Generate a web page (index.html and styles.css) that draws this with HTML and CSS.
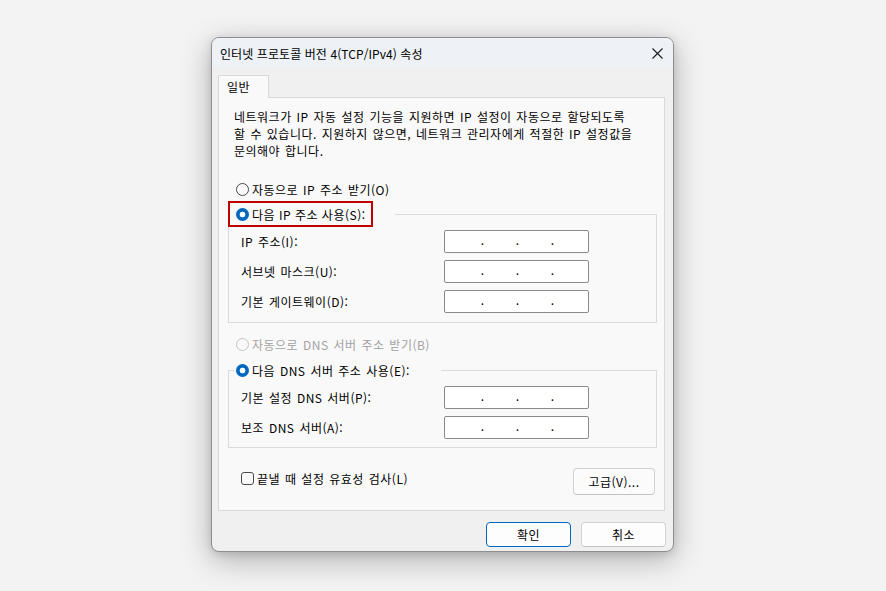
FILE: index.html
```html
<!DOCTYPE html>
<html lang="ko">
<head>
<meta charset="utf-8">
<title>인터넷 프로토콜 버전 4(TCP/IPv4) 속성</title>
<link rel="stylesheet" href="styles.css">
</head>
<body>
<div class="dialog">
  <div class="titlebar">
    <span class="title">인터넷 프로토콜 버전 4(TCP/IPv4) 속성</span>
    <svg class="close" width="11" height="11" viewBox="0 0 11 11"><path d="M0.5 0.5 L10.5 10.5 M10.5 0.5 L0.5 10.5" stroke="#1b1b1b" stroke-width="1.1" fill="none"/></svg>
  </div>
  <div class="body">
    <div class="tabs"><div class="tab">일반</div></div>
    <div class="panel">
      <p class="desc">네트워크가 IP 자동 설정 기능을 지원하면 IP 설정이 자동으로 할당되도록<br>할 수 있습니다. 지원하지 않으면, 네트워크 관리자에게 적절한 IP 설정값을<br>문의해야 합니다.</p>

      <div class="option auto-ip"><span class="radio"></span><span>자동으로 IP 주소 받기(O)</span></div>

      <fieldset class="group group-ip">
        <legend class="legend-ip"><span class="highlight"><span class="radio checked"></span><span>다음 IP 주소 사용(S):</span></span></legend>
        <div class="rows">
          <div class="row"><span class="label">IP 주소(I):</span><span class="ipbox"><span>.</span><span>.</span><span>.</span></span></div>
          <div class="row"><span class="label">서브넷 마스크(U):</span><span class="ipbox"><span>.</span><span>.</span><span>.</span></span></div>
          <div class="row"><span class="label">기본 게이트웨이(D):</span><span class="ipbox"><span>.</span><span>.</span><span>.</span></span></div>
        </div>
      </fieldset>

      <div class="option auto-dns disabled"><span class="radio"></span><span>자동으로 DNS 서버 주소 받기(B)</span></div>

      <fieldset class="group group-dns">
        <legend class="legend-dns"><span class="option"><span class="radio checked"></span><span>다음 DNS 서버 주소 사용(E):</span></span></legend>
        <div class="rows rows-dns">
          <div class="row"><span class="label">기본 설정 DNS 서버(P):</span><span class="ipbox"><span>.</span><span>.</span><span>.</span></span></div>
          <div class="row"><span class="label">보조 DNS 서버(A):</span><span class="ipbox"><span>.</span><span>.</span><span>.</span></span></div>
        </div>
      </fieldset>

      <div class="validate-row">
        <div class="check-option"><span class="checkbox"></span><span>끝낼 때 설정 유효성 검사(L)</span></div>
        <button class="btn btn-advanced">고급(V)...</button>
      </div>
    </div>
    <div class="footer">
      <button class="btn btn-primary">확인</button>
      <button class="btn">취소</button>
    </div>
  </div>
</div>
</body>
</html>
```

FILE: styles.css
```css
html, body {
  margin: 0;
  height: 100%;
}
body {
  background: #f3f3f3;
  display: flex;
  justify-content: center;
  align-items: flex-start;
  padding: 37px 1px 0 0;
  box-sizing: border-box;
  font-family: "Noto Sans CJK KR", "Noto Sans", sans-serif;
  font-size: 12px;
  color: #000;
}
.dialog {
  width: 463px;
  height: 515px;
  box-sizing: border-box;
  border: 1px solid #8e8e8e;
  border-radius: 8px;
  background: #f0f0f0;
  overflow: hidden;
  display: flex;
  flex-direction: column;
  box-shadow: 0 8px 30px rgba(0, 0, 0, 0.28), 0 2px 8px rgba(0, 0, 0, 0.12);
}
.titlebar {
  height: 29px;
  flex: none;
  background: #eef2f6;
  display: flex;
  align-items: center;
  justify-content: space-between;
  padding: 0 10px 0 8px;
}
.title {
  line-height: 17px;
  padding-top: 1px;
  letter-spacing: 0.08px;
}
.close {
  display: block;
  margin-top: 1px;
}
.body {
  flex: 1;
  display: flex;
  flex-direction: column;
  padding: 8px 8px 0 6px;
  letter-spacing: 0.5px;
  word-spacing: 1px;
}
.tabs {
  display: flex;
}
.tab {
  width: 51px;
  height: 23px;
  box-sizing: border-box;
  border: 1px solid #d9d9d9;
  border-bottom: none;
  background: #f9f9f9;
  padding-left: 8px;
  line-height: 21px;
  margin-bottom: -1px;
  position: relative;
  z-index: 1;
}
.panel {
  height: 414px;
  box-sizing: border-box;
  border: 1px solid #d9d9d9;
  background: #f9f9f9;
  padding: 10px 7px 0 9px;
  display: flex;
  flex-direction: column;
}
.desc {
  margin: 0 0 0 6px;
  line-height: 17px;
  white-space: nowrap;
}
.option {
  display: flex;
  align-items: center;
  height: 20px;
  line-height: 17px;
}
.option .radio {
  margin-right: 3px;
}
.auto-ip {
  margin: 20px 0 0 8px;
}
.radio {
  width: 13px;
  height: 13px;
  box-sizing: border-box;
  border-radius: 50%;
  border: 1px solid #4a4a4a;
  background: #fbfbfb;
  flex: none;
}
.radio.checked {
  border: none;
  background: radial-gradient(circle, #ffffff 0 2.6px, #0067c0 3.2px);
}
.disabled {
  color: #a2a2a2;
}
.disabled .radio {
  border-color: #c4c4c4;
  background: #f9f9f9;
}
.group {
  margin: 0;
  padding: 0;
  border: 1px solid #dadada;
  min-width: 0;
}
.group-ip {
  margin-top: 2px;
}
.legend-ip {
  padding: 0 22px 0 0;
  margin-left: -1px;
}
.highlight {
  display: flex;
  align-items: center;
  height: 26px;
  box-sizing: border-box;
  border: 2px solid #c00000;
  padding: 0 5px 0 6px;
  line-height: 17px;
  word-spacing: 0;
}
.highlight .radio {
  margin-right: 3px;
}
.rows {
  display: flex;
  flex-direction: column;
  gap: 7px;
  padding: 3px 0 9px 12px;
}
.rows-dns {
  padding-top: 6px;
  padding-bottom: 8px;
}
.row {
  display: flex;
  align-items: center;
  height: 23px;
}
.label {
  width: 203px;
  flex: none;
  line-height: 17px;
  white-space: nowrap;
}
.ipbox {
  width: 145px;
  height: 23px;
  box-sizing: border-box;
  border: 1px solid #8a8a8a;
  border-radius: 2px;
  background: #fff;
  display: flex;
  padding-left: 20px;
  line-height: 17px;
  letter-spacing: 0;
}
.ipbox span {
  width: 35px;
  text-align: center;
}
.auto-dns {
  margin: 11px 0 0 8px;
}
.group-dns {
  margin-top: 6px;
}
.legend-dns {
  margin-left: 5px;
  padding: 0 31px 0 2px;
}
.validate-row {
  display: flex;
  justify-content: space-between;
  align-items: flex-start;
  margin-top: 20px;
  padding: 0 2px 0 13px;
}
.check-option {
  display: flex;
  align-items: center;
  margin-top: 2px;
  height: 17px;
  line-height: 17px;
}
.checkbox {
  width: 13px;
  height: 13px;
  box-sizing: border-box;
  border: 1px solid #4a4a4a;
  border-radius: 3px;
  background: #fbfbfb;
  margin-right: 3px;
  flex: none;
}
.btn {
  font: inherit;
  letter-spacing: inherit;
  color: #000;
  background: #fdfdfd;
  border: 1px solid #d2d2d2;
  border-bottom-color: #c2c2c2;
  border-radius: 4px;
  padding: 0;
  line-height: 17px;
  width: 85px;
  height: 25px;
}
.btn-advanced {
  width: 82px;
  height: 27px;
  background: #fbfbfb;
}
.btn-primary {
  border: 1px solid #0067c0;
}
.footer {
  display: flex;
  justify-content: flex-end;
  gap: 10px;
  margin-top: 11px;
  margin-right: -1px;
}
```
